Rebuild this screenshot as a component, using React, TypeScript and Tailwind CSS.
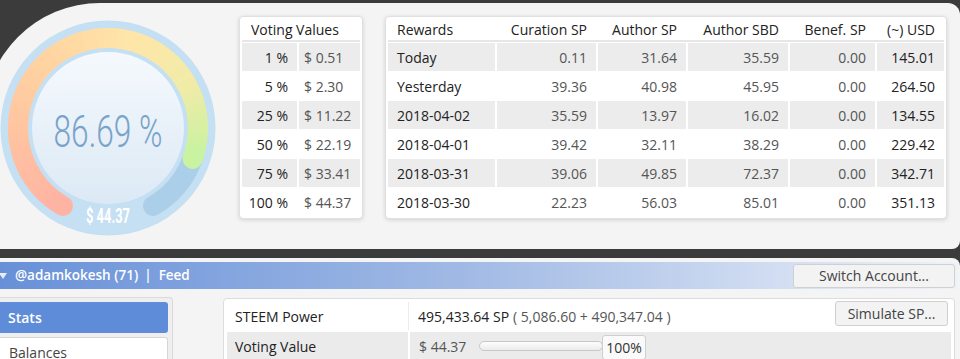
import React from "react";

const votingValues = [
  { pct: "1 %", usd: "$ 0.51" },
  { pct: "5 %", usd: "$ 2.30" },
  { pct: "25 %", usd: "$ 11.22" },
  { pct: "50 %", usd: "$ 22.19" },
  { pct: "75 %", usd: "$ 33.41" },
  { pct: "100 %", usd: "$ 44.37" },
];

const rewards = [
  ["Today", "0.11", "31.64", "35.59", "0.00", "145.01"],
  ["Yesterday", "39.36", "40.98", "45.95", "0.00", "264.50"],
  ["2018-04-02", "35.59", "13.97", "16.02", "0.00", "134.55"],
  ["2018-04-01", "39.42", "32.11", "38.29", "0.00", "229.42"],
  ["2018-03-31", "39.06", "49.85", "72.37", "0.00", "342.71"],
  ["2018-03-30", "22.23", "56.03", "85.01", "0.00", "351.13"],
];

const rewardHeads = ["Rewards", "Curation SP", "Author SP", "Author SBD", "Benef. SP", "(~) USD"];
const colWidths = ["w-[107px]", "w-[99px]", "w-[88px]", "w-[100px]", "w-[85px]", "w-[67px]"];

// colour stops along the gauge arc (angle in degrees, clockwise from 3 o'clock)
const stops: [number, number[]][] = [
  [120, [255, 178, 163]],
  [180, [255, 197, 161]],
  [240, [255, 215, 162]],
  [285, [255, 230, 168]],
  [330, [242, 235, 168]],
  [381, [198, 243, 160]],
];

function colorAt(deg: number) {
  for (let i = 0; i < stops.length - 1; i++) {
    const [a0, c0] = stops[i];
    const [a1, c1] = stops[i + 1];
    if (deg <= a1) {
      const t = Math.max(0, (deg - a0) / (a1 - a0));
      const c = c0.map((v, k) => Math.round(v + (c1[k] - v) * t));
      return `rgb(${c[0]},${c[1]},${c[2]})`;
    }
  }
  const c = stops[stops.length - 1][1];
  return `rgb(${c[0]},${c[1]},${c[2]})`;
}

const CX = 108;
const CY = 108;

function pt(r: number, deg: number) {
  const a = (deg * Math.PI) / 180;
  return [CX + r * Math.cos(a), CY + r * Math.sin(a)];
}

function arc(r: number, a0: number, a1: number) {
  const [x0, y0] = pt(r, a0);
  const [x1, y1] = pt(r, a1);
  const large = a1 - a0 > 180 ? 1 : 0;
  return `M ${x0.toFixed(2)} ${y0.toFixed(2)} A ${r} ${r} 0 ${large} 1 ${x1.toFixed(2)} ${y1.toFixed(2)}`;
}

function Gauge() {
  const start = 120;
  const end = 120 + 0.8669 * 300;
  const n = 60;
  const step = (end - start) / n;
  const segs = [];
  for (let i = 0; i < n; i++) {
    const a0 = start + i * step;
    const a1 = Math.min(end, a0 + step + 0.8);
    segs.push(
      <path
        key={i}
        d={arc(90, a0, a1)}
        stroke={colorAt(a0 + step / 2)}
        strokeWidth={20}
        fill="none"
        strokeLinecap={i === 0 || i === n - 1 ? "round" : "butt"}
      />
    );
  }
  return (
    <svg width="216" height="216" viewBox="0 0 216 216" className="shrink-0">
      <defs>
        <linearGradient id="inner" x1="0" y1="0" x2="0" y2="1">
          <stop offset="0" stopColor="#f5f9fd" />
          <stop offset="1" stopColor="#dce9f5" />
        </linearGradient>
      </defs>
      <circle cx={CX} cy={CY} r={107.5} fill="#c5dff3" />
      <path d={arc(90, end, 420)} stroke="#abcee9" strokeWidth={20} fill="none" strokeLinecap="round" />
      {segs}
      <circle cx={CX} cy={CY} r={76} fill="url(#inner)" />
      <text
        x={CX}
        y={127}
        textAnchor="middle"
        textLength={109}
        lengthAdjust="spacingAndGlyphs"
        fontFamily="Roboto, 'Liberation Sans', sans-serif"
        fontWeight={300}
        fontSize={45}
        fill="#79a3c9"
      >
        86.69 %
      </text>
      <text
        x={CX}
        y={203}
        textAnchor="middle"
        textLength={44}
        lengthAdjust="spacingAndGlyphs"
        fontFamily="Roboto, 'Liberation Sans', sans-serif"
        fontWeight={700}
        fontSize={20}
        fill="#ffffff"
      >
        $ 44.37
      </text>
    </svg>
  );
}

function VotingValues() {
  return (
    <div className="mt-[13px] ml-[23px] w-[124px] h-[203px] shrink-0 bg-white border border-[#e0e0e0] rounded-[4px] shadow-[0_1px_4px_rgba(0,0,0,0.14)] p-[2px]">
      <div className="h-[23px] flex items-center pl-[9px] border-b-2 border-[#e6e6e6] text-[#222]">Voting Values</div>
      {votingValues.map((v, i) => (
        <div key={v.pct} className="flex gap-[2px] h-[28px] mt-[1px]">
          <div className={`w-[55px] flex items-center justify-end pr-[9px] text-[#222] ${i % 2 === 0 ? "bg-[#ececec]" : "bg-white"}`}>
            {v.pct}
          </div>
          <div className={`flex-1 flex items-center pl-[5px] text-[#555] ${i % 2 === 0 ? "bg-[#ececec]" : "bg-white"}`}>
            {v.usd}
          </div>
        </div>
      ))}
    </div>
  );
}

function Rewards() {
  return (
    <div className="mt-[13px] ml-[22px] w-[562px] h-[203px] shrink-0 bg-white border border-[#e0e0e0] rounded-[4px] shadow-[0_1px_4px_rgba(0,0,0,0.14)] p-[2px]">
      <div className="flex gap-[2px] h-[23px] border-b-2 border-[#e6e6e6] text-[#222]">
        {rewardHeads.map((h, c) => (
          <div key={h} className={`${colWidths[c]} flex items-center ${c === 0 ? "pl-[9px]" : "justify-end pr-[9px]"}`}>
            {h}
          </div>
        ))}
      </div>
      {rewards.map((row, i) => (
        <div key={row[0]} className="flex gap-[2px] h-[28px] mt-[1px]">
          {row.map((cell, c) => (
            <div
              key={c}
              className={`${colWidths[c]} flex items-center ${c === 0 ? "pl-[9px] text-[#222]" : "justify-end pr-[9px]"} ${
                c > 0 && c < 5 ? "text-[#555]" : "text-[#222]"
              } ${i % 2 === 0 ? "bg-[#ececec]" : "bg-white"}`}
            >
              {cell}
            </div>
          ))}
        </div>
      ))}
    </div>
  );
}

export default function App() {
  return (
    <div className="w-[960px] h-[359px] overflow-hidden bg-[#3b3b3b] font-['Open_Sans',sans-serif] text-[14px] flex flex-col">
      <div className="mt-[3px] ml-[-16px] pl-[16px] h-[246px] shrink-0 bg-[#f4f4f4] rounded-tl-[116px] rounded-tr-[12px] rounded-br-[8px] flex">
        <div className="mt-[17px]">
          <Gauge />
        </div>
        <VotingValues />
        <Rewards />
      </div>

      <div className="mt-[9px] flex-1 bg-[#f4f4f4] rounded-tr-[8px] pt-[4px]">
        <div className="h-[27px] flex items-center bg-gradient-to-r from-[#6890d8] via-[#a3bbe5] to-[#eef2f9] text-white text-[13.5px] font-semibold mr-[2px]">
          <svg width="8" height="6" viewBox="0 0 8 6" className="ml-[-1px]">
            <polygon points="0,0 8,0 4,6" fill="#e9eef8" />
          </svg>
          <span className="ml-[8px]">@adamkokesh (71)</span>
          <span className="ml-[6px]">|</span>
          <span className="ml-[7px]">Feed</span>
          <button className="ml-auto mr-[3px] w-[162px] h-[24px] bg-[#f3f3f3] border border-[#d0d0d0] rounded-[3px] text-[#444] text-[14px] font-normal">
            Switch Account...
          </button>
        </div>

        <div className="mt-[8px] flex text-[14px]">
          <div className="w-[173px] shrink-0 h-[70px] border-t border-r border-[#dadada] rounded-tr-[4px] bg-[#efefef] pt-[4px] pr-[4px] flex flex-col gap-[4px]">
            <div className="h-[31px] bg-[#5f8cd8] rounded-r-[3px] flex items-center pl-[8px] text-white font-semibold">Stats</div>
            <div className="h-[30px] bg-white border border-l-0 border-[#d6d6d6] rounded-r-[3px] flex items-center pl-[9px] text-[#444]">Balances</div>
          </div>

          <div className="ml-[50px] mr-[5px] mt-[1px] flex-1 h-[70px] bg-white border border-[#dcdcdc] rounded-[4px] p-[3px]">
            <div className="h-[28px] flex">
              <div className="w-[181px] flex items-center pl-[8px] text-[#222]">STEEM Power</div>
              <div className="flex items-center pl-[9px] border-l border-[#ececec]">
                <span className="text-[#222]">495,433.64 SP</span>
                <span className="ml-[4px] text-[#555]">( 5,086.60 + 490,347.04 )</span>
              </div>
              <button className="ml-auto mr-[3px] -mt-[1px] w-[113px] h-[25px] bg-[#f3f3f3] border border-[#d0d0d0] rounded-[3px] text-[#444]">
                Simulate SP...
              </button>
            </div>
            <div className="h-[28px] mt-[2px] flex bg-[#ebebeb]">
              <div className="w-[181px] flex items-center pl-[8px] text-[#222]">Voting Value</div>
              <div className="flex items-center pl-[9px] border-l-2 border-white">
                <span className="w-[60px] text-[#555]">$ 44.37</span>
                <div className="w-[124px] h-[10px] rounded-full border border-[#c8c8c8] bg-gradient-to-b from-[#fdfdfd] to-[#ececec]" />
                <div className="-ml-[1px] w-[44px] h-[25px] mt-[2px] bg-[#fafafa] border border-[#cfcfcf] rounded-[3px] flex items-center justify-center text-[#333]">
                  100%
                </div>
              </div>
            </div>
          </div>
        </div>
      </div>
    </div>
  );
}
